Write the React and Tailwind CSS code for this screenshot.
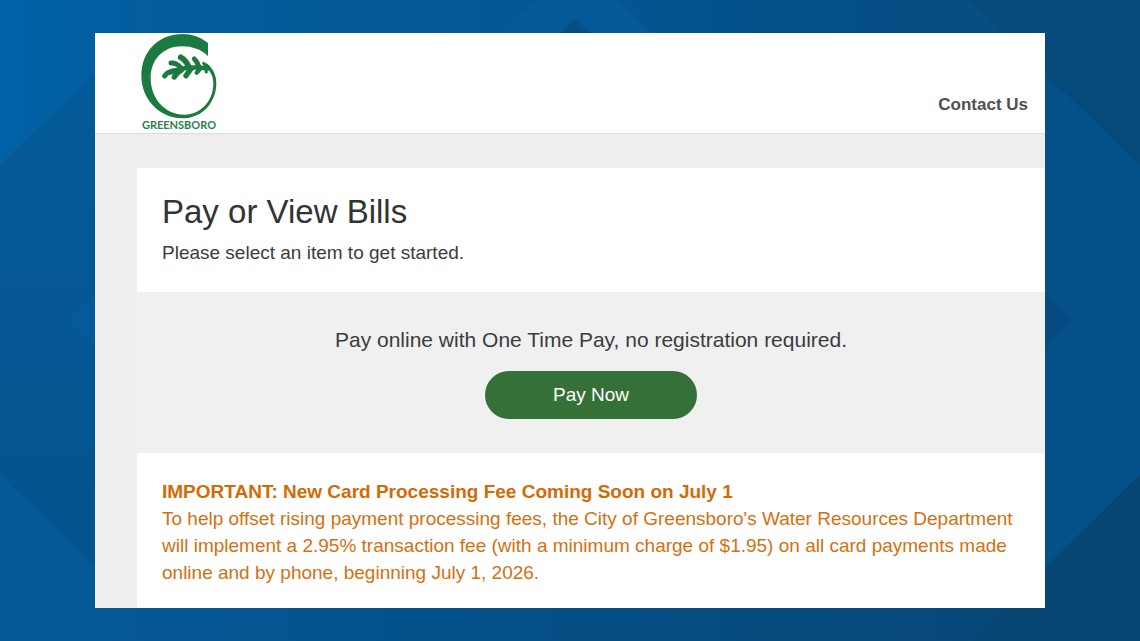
const Backdrop = () => (
  <svg
    className="absolute inset-0 w-full h-full"
    viewBox="0 0 1140 641"
    preserveAspectRatio="none"
    aria-hidden="true"
  >
    <defs>
      <linearGradient id="base" x1="0" y1="0" x2="1" y2="0">
        <stop offset="0" stopColor="#0061a7" />
        <stop offset="0.15" stopColor="#035c9c" />
        <stop offset="0.5" stopColor="#045694" />
        <stop offset="0.8" stopColor="#054e84" />
        <stop offset="1" stopColor="#054e84" />
      </linearGradient>
      <linearGradient id="bottom" x1="0" y1="0" x2="1" y2="0">
        <stop offset="0" stopColor="#045a99" />
        <stop offset="0.5" stopColor="#054f85" />
        <stop offset="1" stopColor="#074573" />
      </linearGradient>
      <linearGradient id="left" x1="0" y1="0" x2="0" y2="1">
        <stop offset="0" stopColor="#045a99" />
        <stop offset="1" stopColor="#04548c" />
      </linearGradient>
    </defs>
    <rect width="1140" height="641" fill="url(#base)" />
    <rect y="320" width="1140" height="321" fill="url(#bottom)" />

    {/* Side bands */}
    <polygon points="0,165 120,48 120,590 0,475" fill="url(#left)" />
    <polygon points="970,0 1140,0 1140,165" fill="#064a7c" />
    <polygon points="1045,75 1140,165 1140,475 1045,568" fill="#04518a" />
    <polygon points="1140,475 1140,641 972,641" fill="#074572" />

    {/* Chevrons */}
    <polygon points="535,0 618,0 660,42 490,42" fill="#045998" />
    <polygon points="575,18 600,43 550,43" fill="#054f86" />
    <polygon points="68,320 100,288 100,352" fill="#045a9b" />
    <polygon points="1071,320 1040,289 1040,351" fill="#064b7e" />
  </svg>
)

const Logo = () => (
  <svg className="w-[78px] h-[98px]" viewBox="27 15 234 294" role="img" aria-label="Greensboro">
    <g fill="#1b7a3f">
      <path d="M234 45C211 27 186 18 158 18C86 18 34 70 34 142C34 216 90 271 158 271C215 271 259 225 259 165C259 140 247 119 230 106L221 111C242 128 250 145 250 167C250 217 213 260 163 260C106 260 62 213 62 150C62 95 100 55 155 55C188 55 214 65 234 84Z" />
    </g>
    {/* Leaf sprig */}
    <g fill="none" stroke="#1b7a3f" strokeLinecap="round">
      <path d="M122 133C145 121 185 115 234 121" strokeWidth="14" />
      <path d="M104 144Q110 133 130 128" strokeWidth="15" />
      <path d="M123 105Q140 104 152 119" strokeWidth="15" />
      <path d="M152 88Q168 97 176 116" strokeWidth="17" />
      <path d="M193 93Q202 101 206 115" strokeWidth="15" />
      <path d="M221 106Q224 111 232 117" strokeWidth="9" />
      <path d="M133 147Q137 138 154 126" strokeWidth="16" />
      <path d="M168 143Q174 134 184 121" strokeWidth="16" />
      <path d="M200 134Q206 129 211 119" strokeWidth="13" />
      <path d="M229 132Q229 125 224 117" strokeWidth="9" />
    </g>
    <text
      x="147"
      y="303"
      textAnchor="middle"
      fill="#2b7f4c"
      fontSize="33"
      fontWeight="700"
      fontFamily="Lato, sans-serif"
    >
      GREENSBORO
    </text>
  </svg>
)

const Header = () => (
  <header className="flex items-end justify-between bg-white border-b border-[#dcdcdc] pl-11 pr-[17px]">
    <a href="#home" className="pb-0.5">
      <Logo />
    </a>
    <a href="#contact" className="mb-4 text-[17px] leading-6 font-bold text-[#505050]">
      Contact Us
    </a>
  </header>
)

const App = () => {
  return (
    <div className="relative min-h-screen bg-[#04548e] py-[33px] font-['Liberation_Sans',Arial,sans-serif] text-[#3c3c3c]">
      <Backdrop />
      <div className="relative w-10/12 mx-auto bg-[#eeeeee]">
        <Header />
        <main className="pt-[34px] pl-[42px]">
          <section className="bg-white px-[25px] pt-6 pb-[25px]">
            <h1 className="text-[33px] leading-10 text-[#333333]">Pay or View Bills</h1>
            <p className="mt-[7px] text-[19px] leading-7">Please select an item to get started.</p>
          </section>

          <section className="flex flex-col items-center bg-[#f0f0f0] py-[34px]">
            <p className="text-[21px] leading-7">Pay online with One Time Pay, no registration required.</p>
            <button
              type="button"
              className="mt-[17px] h-12 px-[68px] rounded-full bg-[#357038] text-[19px] text-white cursor-pointer"
            >
              Pay Now
            </button>
          </section>

          {/* Fee notice */}
          <section className="bg-white px-[25px] pt-[25px] pb-[22px] text-[19px] leading-[27px] text-[#d4700f]">
            <h2 className="font-bold text-[#d56a05]">
              IMPORTANT: New Card Processing Fee Coming Soon on July 1
            </h2>
            <p>
              To help offset rising payment processing fees, the City of Greensboro's Water Resources
              Department will implement a 2.95% transaction fee (with a minimum charge of $1.95) on all
              card payments made online and by phone, beginning July 1, 2026.
            </p>
          </section>
        </main>
      </div>
    </div>
  )
}

export default App
